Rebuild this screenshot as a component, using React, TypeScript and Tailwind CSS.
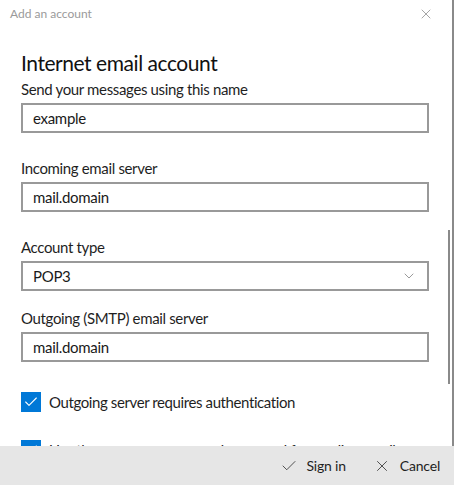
import { Check, X, ChevronDown } from 'lucide-react';

const font = { fontFamily: 'Lato, "Noto Sans", sans-serif' };

function Field({ label, value, select, className = '' }: { label: string; value: string; select?: boolean; className?: string }) {
  return (
    <div className={className}>
      <p className="text-[15px] leading-[20px] tracking-[-0.35px] text-[#1f1f1f]">{label}</p>
      <div className="mt-1 flex h-[30px] w-[408px] items-center justify-between border-2 border-[#999999] bg-white pl-[10px] pr-[10px]">
        <span className="text-[15px] tracking-[-0.3px] text-[#1a1a1a]">{value}</span>
        {select && <ChevronDown size={16} strokeWidth={1} className="text-[#666]" />}
      </div>
    </div>
  );
}

function CheckRow({ label }: { label: string }) {
  return (
    <div className="flex items-center gap-2">
      <span className="flex h-5 w-5 shrink-0 items-center justify-center bg-[#0078d7]">
        <Check size={16} strokeWidth={1.6} className="text-white" />
      </span>
      <span className="whitespace-nowrap text-[15px] tracking-[-0.4px] text-[#1f1f1f]">{label}</span>
    </div>
  );
}

export default function App() {
  return (
    <div className="flex h-[485px] w-[454px] flex-col overflow-hidden bg-white" style={font}>
      <div className="relative flex-1 overflow-hidden border-r-2 border-[#8a8a8a]">
        <div className="flex h-[28px] items-center justify-between pl-[10px] pr-[18px]">
          <span className="text-[12px] text-[#9a9a9a]">Add an account</span>
          <X size={16} strokeWidth={1} className="text-[#777]" />
        </div>
        <div className="pl-[21px]">
          <h1 className="mt-[21px] text-[21px] leading-[28px] tracking-[-0.45px] text-[#111]">Internet email account</h1>
          <Field label="Send your messages using this name" value="example" className="mt-[2px]" />
          <Field label="Incoming email server" value="mail.domain" className="mt-[25px]" />
          <Field label="Account type" value="POP3" select className="mt-[25px]" />
          <Field label="Outgoing (SMTP) email server" value="mail.domain" className="mt-[17px]" />
          <div className="mt-[29px]">
            <CheckRow label="Outgoing server requires authentication" />
          </div>
          <div className="mt-[25px]">
            <CheckRow label="Use the same username and password for sending email" />
          </div>
        </div>
        <div className="absolute right-[2px] top-[230px] h-[154px] w-[2px] bg-[#8a8a8a]" />
      </div>
      <div className="flex h-[39px] shrink-0 items-center justify-end gap-[27px] bg-[#e6e6e6] pr-[14px] text-[14px] tracking-[-0.2px] text-[#1f1f1f]">
        <span className="flex items-center gap-[8px]">
          <Check size={18} strokeWidth={1} />
          Sign in
        </span>
        <span className="flex items-center gap-[9px]">
          <X size={18} strokeWidth={1} />
          Cancel
        </span>
      </div>
    </div>
  );
}
